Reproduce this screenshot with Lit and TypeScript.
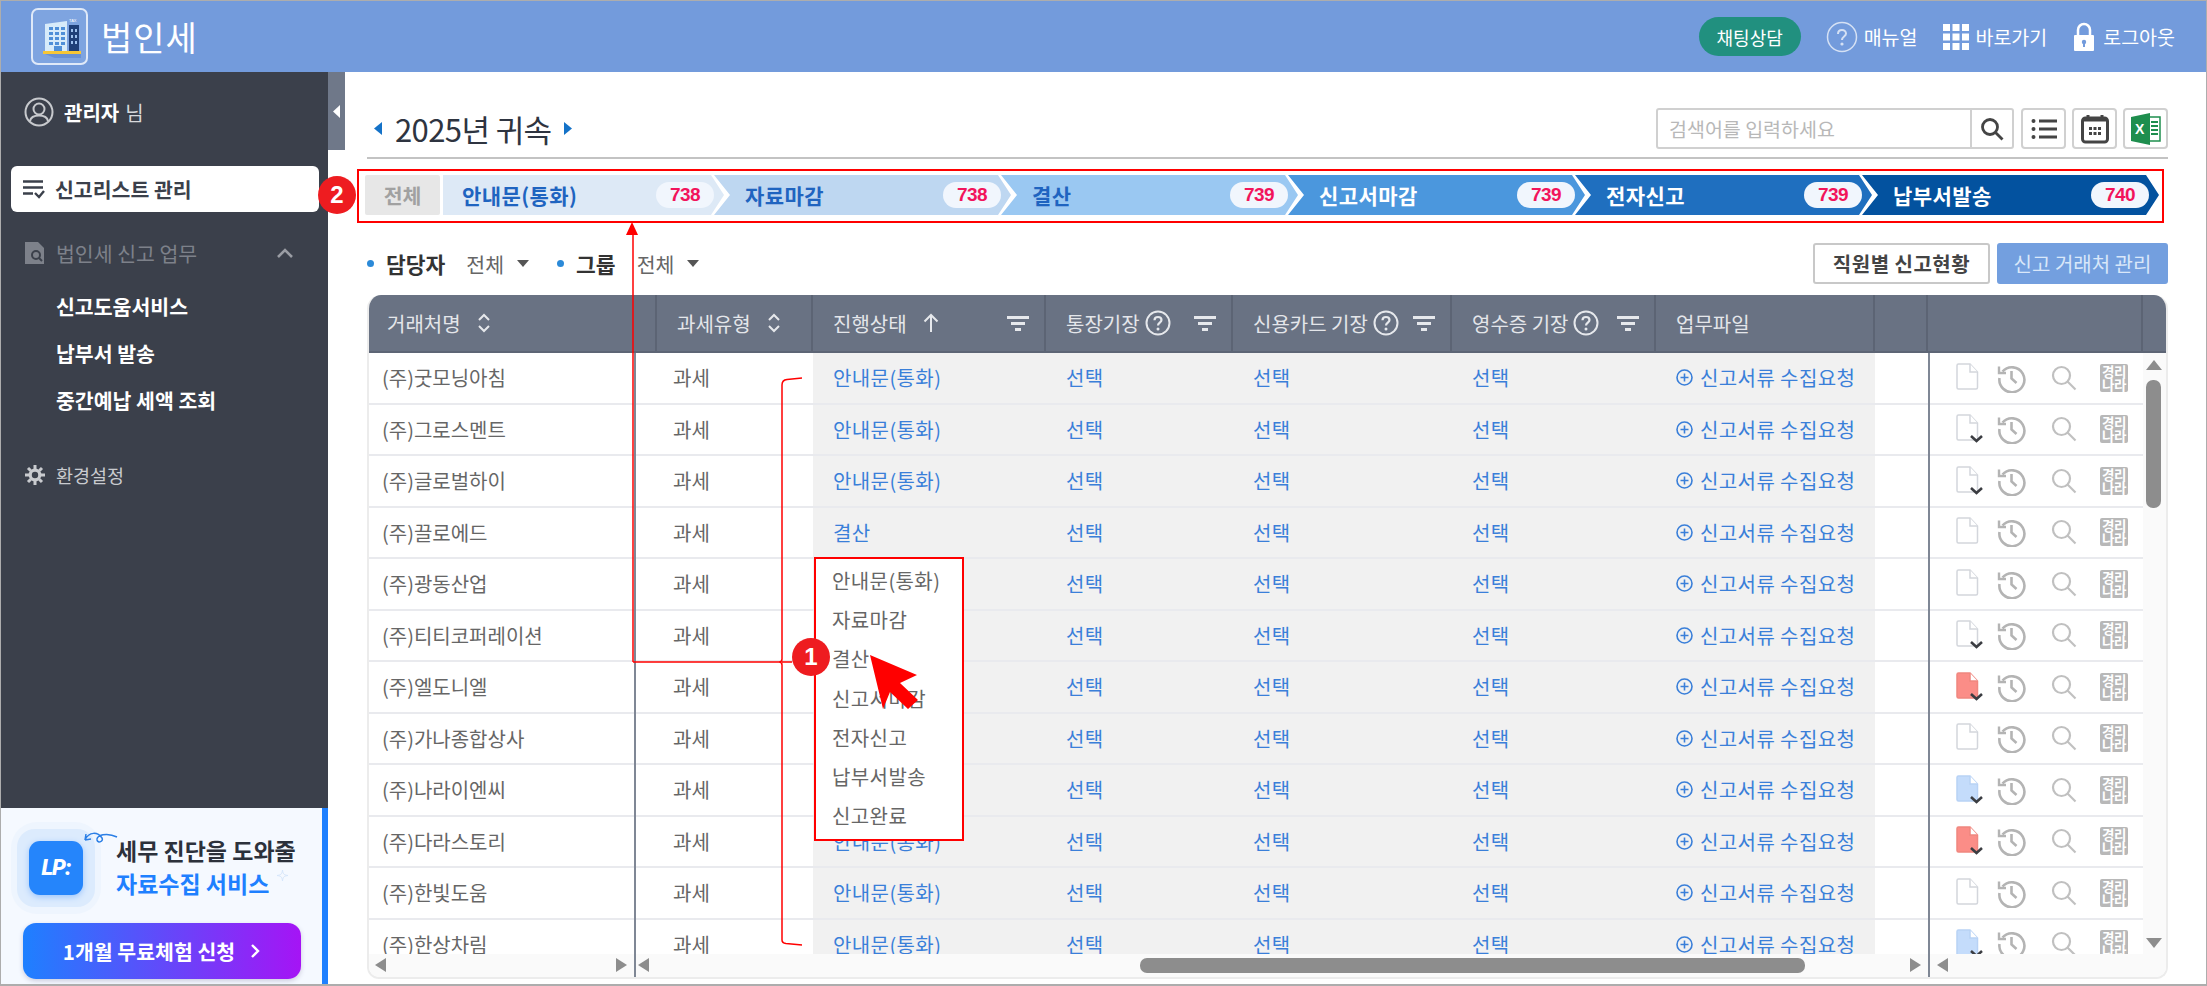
import { LitElement, html, css, svg } from "lit";
import { customElement } from "lit/decorators.js";

const STEPS = [
  { t: "안내문(통화)", n: 738, cls: "s1" },
  { t: "자료마감", n: 738, cls: "s2" },
  { t: "결산", n: 739, cls: "s3" },
  { t: "신고서마감", n: 739, cls: "s4" },
  { t: "전자신고", n: 739, cls: "s5" },
  { t: "납부서발송", n: 740, cls: "s6" },
];
const ROWS: [string, string, string][] = [
  ["(주)굿모닝아침", "안내문(통화)", "plain"],
  ["(주)그로스멘트", "안내문(통화)", "dl"],
  ["(주)글로벌하이", "안내문(통화)", "dl"],
  ["(주)끌로에드", "결산", "plain"],
  ["(주)광동산업", "안내문(통화)", "plain"],
  ["(주)티티코퍼레이션", "안내문(통화)", "dl"],
  ["(주)엘도니엘", "안내문(통화)", "red"],
  ["(주)가나종합상사", "안내문(통화)", "plain"],
  ["(주)나라이엔씨", "안내문(통화)", "blue"],
  ["(주)다라스토리", "안내문(통화)", "red"],
  ["(주)한빛도움", "안내문(통화)", "plain"],
  ["(주)한상차림", "안내문(통화)", "blue"],
];
const MENU = ["안내문(통화)", "자료마감", "결산", "신고서마감", "전자신고", "납부서발송", "신고완료"];

const sortIcon = html`<svg class="hi gapl" width="14" height="22" viewBox="0 0 14 22" fill="none" stroke="#e6e8ec" stroke-width="2"><path d="M2 8l5-5 5 5M2 14l5 5 5-5"/></svg>`;
const upIcon = html`<svg class="hi gapl" width="16" height="20" viewBox="0 0 16 20" fill="none" stroke="#e6e8ec" stroke-width="2"><path d="M8 19V2M1.5 8.5L8 2l6.5 6.5"/></svg>`;
const filterIcon = html`<svg class="hi" width="22" height="16" viewBox="0 0 22 16" fill="#e6e8ec"><rect x="0" y="1" width="22" height="3"/><rect x="4" y="7" width="14" height="3"/><rect x="8" y="13" width="6" height="3"/></svg>`;
const helpIcon = html`<svg class="hi" width="26" height="26" viewBox="0 0 26 26" fill="none"><circle cx="13" cy="13" r="11.5" stroke="#e6e8ec" stroke-width="2"/><path d="M9.5 10.2c0-2 1.5-3.2 3.5-3.2s3.5 1.2 3.5 3c0 2.6-3.5 2.6-3.5 5.4" stroke="#e6e8ec" stroke-width="2.2"/><circle cx="13" cy="19" r="1.5" fill="#e6e8ec"/></svg>`;
const plusIcon = html`<svg class="pi" width="17" height="17" viewBox="0 0 17 17" fill="none" stroke="#3a7fd9" stroke-width="1.6"><circle cx="8.5" cy="8.5" r="7.5"/><path d="M8.5 4.5v8M4.5 8.5h8"/></svg>`;

function docIcon(kind: string) {
  const fill = kind === "red" ? "#fb8d87" : kind === "blue" ? "#c4dcfb" : "#fff";
  const stroke = kind === "red" ? "#f0877f" : kind === "blue" ? "#b8d2f5" : "#d3d6dc";
  const dl = kind !== "plain";
  return html`<svg class="doc" width="30" height="30" viewBox="0 0 30 30" fill="none">
    <path d="M2 2.5a1.5 1.5 0 0 1 1.5-1.5H15l7.5 8v15.5A1.5 1.5 0 0 1 21 26H3.500A1.500 1.500 0 0 1 2 24.500z" fill="${fill}" stroke="${stroke}" stroke-width="1.500"/>
    <path d="M15 1v8h7.500" fill="#fff" stroke="${stroke}" stroke-width="1.500"/>
    ${dl ? svg`<path d="M16 22l5.500 5 5.500-5" stroke="#3b3d42" stroke-width="2.600"/>` : ""}
  </svg>`;
}
const historyIcon = html`<svg width="30" height="30" viewBox="0 0 30 30" fill="none" stroke="#b4b4b4" stroke-width="2.600"><path d="M5.500 8.500A12.500 12.500 0 1 1 2.500 15"/><path d="M2 3.500v6.500h7" stroke-width="2.400"/><path d="M14.500 8v7.500l5 4.500"/></svg>`;
const searchIcon = html`<svg width="26" height="26" viewBox="0 0 26 26" fill="none" stroke="#c0c0c0" stroke-width="2.200"><circle cx="10.500" cy="10.500" r="8.500"/><path d="M16.500 16.500l8 8"/></svg>`;

@customElement("app-root")
export class AppRoot extends LitElement {
  static styles = css`
    :host { display: block; width: 2207px; height: 986px; overflow: hidden; font-family: "Noto Sans CJK KR", "Noto Sans", sans-serif; color: #555; background: #fff; }
    * { box-sizing: border-box; }
    .page { position: relative; width: 2207px; height: 986px; border: 1px solid #adadad; border-bottom-width: 2px; display: flex; flex-direction: column; overflow: hidden; }

    .top { height: 71px; flex: none; background: #739bdc; display: flex; align-items: center; padding: 0 31px 0 30px; color: #fff; }
    .logo { width: 57px; height: 57px; border: 2px solid #dfe9f8; border-radius: 7px; background: #7ea4e0; display: flex; align-items: center; justify-content: center; }
    .brand { font-size: 34px; margin-left: 13px; letter-spacing: 1px; line-height: 1; }
    .spacer { flex: 1; }
    .chat { width: 102px; height: 39px; border-radius: 20px; background: #21907f; color: #fff; font-size: 18px; display: flex; align-items: center; justify-content: center; margin-right: 25px; }
    .tlink { display: flex; align-items: center; gap: 6px; font-size: 19.5px; margin-right: 26px; }
    .tlink:last-child { margin-right: 0; gap: 8px; }

    .body { flex: 1; display: flex; min-height: 0; }
    .side { width: 327px; flex: none; background: #3b404b; display: flex; flex-direction: column; position: relative; color: #fff; }
    .handle { position: absolute; left: 327px; top: 0; width: 17px; height: 78px; background: #6f7889; display: flex; align-items: center; justify-content: center; }
    .user { display: flex; align-items: center; gap: 10px; padding: 0 0 14px 23px; height: 94px; font-size: 20px; }
    .user b { font-weight: 700; }
    .user span { color: #d7d9dc; margin-left: -4px; }
    .active { margin: 0 9px 0 10px; height: 46px; border-radius: 6px; background: #fff; color: #3b404b; display: flex; align-items: center; gap: 10px; padding-left: 12px; font-weight: 700; font-size: 20.5px; }
    .group { display: flex; align-items: center; height: 40px; margin-top: 21px; padding: 0 35px 0 24px; gap: 11px; color: #7d818a; font-size: 20.5px; }
    .group span { flex: 1; }
    .sub { padding: 0 0 0 55px; height: 47px; display: flex; align-items: center; font-size: 20.5px; font-weight: 700; }
    .sub.first { margin-top: 9px; }
    .cfg { display: flex; align-items: center; gap: 11px; padding-left: 24px; height: 40px; margin-top: 32px; color: #c9cbcf; font-size: 18.5px; }
    .banner { margin-top: auto; height: 176px; background: #f5f9ff; border-right: 6px solid #1e80ff; position: relative; padding: 0 0 0 22px; display: flex; flex-direction: column; }
    .bhead { display: flex; align-items: center; height: 115px; padding-top: 4px; }
    .halo { width: 90px; height: 92px; margin-left: -12px; border-radius: 26px; background: #eef5fe; display: flex; align-items: center; justify-content: center; flex: none; }
    .halo2 { width: 78px; height: 78px; border-radius: 18px; background: #dcebfd; display: flex; align-items: center; justify-content: center; }
    .lp { width: 54px; height: 54px; border-radius: 11px; background: #2585fb; color: #fff; font: italic 900 22px "Roboto", sans-serif; display: flex; align-items: center; justify-content: center; letter-spacing: -1px; box-shadow: 0 2px 6px #9cc5fb; }
    .btxt { margin-left: 15px; font-size: 23px; font-weight: 700; line-height: 33px; color: #2c313b; white-space: nowrap; margin-top: -2px; }
    .btxt div + div { color: #1e80ff; }
    .squig { position: absolute; left: 83px; top: 20px; }
    .star { position: absolute; left: 276px; top: 62px; }
    .btn { width: 278px; height: 56px; border-radius: 13px; background: linear-gradient(90deg, #1e80ff, #a514f5); color: #fff; font-size: 20.5px; font-weight: 700; display: flex; align-items: center; justify-content: center; gap: 15px; box-shadow: 0 2px 5px #ccd; margin-top: 0; }

    .main { flex: 1; min-width: 0; padding: 0 38px 5px 39px; display: flex; flex-direction: column; position: relative; }
    .title { height: 87px; flex: none; border-bottom: 2px solid #c3c3c3; display: flex; align-items: center; padding: 28px 0 0 7px; }
    .ttext { font-size: 31px; color: #2e3440; margin: 0 12px 0 13px; letter-spacing: -0.6px; line-height: 1; }
    .search { width: 358px; height: 41px; border: 2px solid #d0d0d0; border-radius: 3px; display: flex; align-items: center; color: #b8b8b8; font-size: 19.5px; padding-left: 11px; margin-right: 1px; }
    .search span { flex: 1; }
    .sbtn { width: 42px; height: 37px; border-left: 2px solid #d0d0d0; display: flex; align-items: center; justify-content: center; }
    .tbtn { width: 45px; height: 41px; border: 2px solid #d0d0d0; border-radius: 4px; margin-left: 6px; display: flex; align-items: center; justify-content: center; background: #fff; }

    .pipe { display: flex; height: 40px; margin: 16px 0 0 -2px; flex: none; }
    .all { width: 75px; border-radius: 2px; background: #e7e7e7; color: #a1a1a1; font-size: 20.5px; font-weight: 700; display: flex; align-items: center; justify-content: center; margin-right: 3px; }
    .step { width: 297px; margin-right: -10px; flex: none; display: flex; align-items: center; padding: 0 10px 0 31px; font-size: 21px; font-weight: 700; letter-spacing: 0.4px; white-space: nowrap; clip-path: polygon(0 0, calc(100% - 13px) 0, 100% 50%, calc(100% - 13px) 100%, 0 100%, 16px 50%); }
    .step.s1 { padding-left: 19px; clip-path: polygon(0 0, calc(100% - 13px) 0, 100% 50%, calc(100% - 13px) 100%, 0 100%); width: 281px; }
    .step span { flex: 1; }
    .step i { width: 58px; height: 26px; border-radius: 13px; background: #f1f6fd; color: #f2145b; font: 700 19px "Liberation Sans", sans-serif; letter-spacing: -0.5px; display: flex; align-items: center; justify-content: center; flex: none; }
    .s1 { background: #dde9f6; color: #1f64c0; }
    .s2 { background: #bed7f1; color: #1f64c0; }
    .s3 { background: #9ac8f2; color: #1f64c0; }
    .s4 { background: #4b97dd; color: #fff; }
    .s5 { background: #1f6fbf; color: #fff; }
    .s6 { background: #03529f; color: #fff; }

    .filters { display: flex; align-items: center; height: 41px; margin-top: 28px; flex: none; font-size: 20.5px; color: #666; }
    .dot { width: 7px; height: 7px; border-radius: 50%; background: #2b8ad8; margin: 0 12px 0 0; }
    .filters b { font-weight: 700; color: #333; font-size: 21.5px; margin-right: 21px; }
    .caret { width: 0; height: 0; border: 6px solid transparent; border-top: 7px solid #555; border-bottom: 0; margin: 0 28px 0 13px; }
    .caret.g { margin-right: 0; }
    .fbtn { width: 177px; height: 41px; border: 2px solid #c8c8c8; border-radius: 3px; color: #444; font-weight: 700; font-size: 20px; letter-spacing: 0.5px; display: flex; align-items: center; justify-content: center; background: #fff; white-space: nowrap; }
    .fbtn.pri { width: 171px; background: #739fdf; border-color: #739fdf; color: #d9e7f9; font-weight: 400; margin-left: 7px; letter-spacing: 0; }

    .table { flex: 1; margin-top: 11px; min-height: 0; position: relative; border-radius: 14px 14px 12px 12px; border: 2px solid #ececec; border-top: 0; display: flex; flex-direction: column; overflow: hidden; }
    .cols { display: grid; grid-template-columns: 288px 156px 233px 187px 219px 204px 219px 53px 215px 1fr; }
    .thead { height: 58px; flex: none; background: #697283; color: #e4e6ea; font-size: 20px; border-bottom: 2px solid #5d6575; }
    .th { display: flex; align-items: center; border-right: 2px solid #5c6474; padding-left: 20px; gap: 5px; min-width: 0; white-space: nowrap; }
    .th:first-child { padding-left: 18px; }
    .th:last-child { border-right: 0; }
    .th .gapl { margin-left: 11px; }
    .th .grow { flex: 1; }
    .th .pr { margin-right: 15px; display: flex; }
    .tbody { flex: 1; min-height: 0; overflow: hidden; }
    .tr { height: 51.5px; font-size: 20px; color: #666; }
    .td { display: flex; align-items: center; border-bottom: 2px solid #e9eaee; padding-left: 20px; white-space: nowrap; min-width: 0; }
    .td:first-child { padding-left: 13px; }
    .td:nth-child(2) { padding-left: 16px; }
    .td.g { background: #f1f1f1; color: #3a7fd9; letter-spacing: 0.4px; }
    .td.act { padding-left: 27px; gap: 0; }
    .td.sc { border: 0; background: #fafafa; padding: 0; }
    .td .doc { margin-right: 12px; flex: none; }
    .td .hist { margin-right: 24px; display: flex; }
    .td .sr { margin-right: 23px; display: flex; }
    .td .pi { margin-right: 7px; flex: none; }
    .kn { width: 28px; height: 28px; background: #b8b8b8; color: #fff; border-radius: 2px; font-size: 13.5px; line-height: 13px; font-weight: 700; text-align: center; display: flex; align-items: center; justify-content: center; letter-spacing: -0.5px; }
    .tfoot { height: 23px; flex: none; background: #fafafa; position: relative; }

    .ar { position: absolute; width: 0; height: 0; border-style: solid; border-color: transparent; }
    .ar.l { border-width: 7px 11px 7px 0; border-right-color: #8d8d8d; top: 4px; }
    .ar.r { border-width: 7px 0 7px 11px; border-left-color: #8d8d8d; top: 4px; }
    .ar.u { border-width: 0 8px 10px; border-bottom-color: #8d8d8d; }
    .ar.d { border-width: 10px 8px 0; border-top-color: #8d8d8d; }
    .thumb { position: absolute; background: #8d8d8d; border-radius: 7px; }
    .fline { position: absolute; top: 58px; bottom: 0; width: 2px; background: #7f8795; }
    .sbar { position: absolute; right: 0; top: 58px; bottom: 0; width: 23px; background: #fafafa; }

    .over { position: absolute; left: 0; top: 0; width: 2207px; height: 986px; pointer-events: none; }
    .redbox { position: absolute; left: 356px; top: 168px; width: 1807px; height: 54px; border: 2px solid #f00; }
    .badge { position: absolute; width: 38px; height: 38px; border-radius: 50%; background: #ee1c20; color: #fff; font: 700 24px "Liberation Sans", sans-serif; display: flex; align-items: center; justify-content: center; }
    .menu { position: absolute; left: 813px; top: 556px; width: 150px; height: 284px; background: #fff; border: 2px solid #f00; padding: 2px 0 0 16px; font-size: 20px; letter-spacing: 0.4px; color: #666; display: flex; flex-direction: column; }
    .menu div { height: 39.2px; display: flex; align-items: center; white-space: nowrap; }
  `;

  render() {
    return html`<div class="page">
      <header class="top">
        <div class="logo">
          <svg width="42" height="42" viewBox="0 0 42 42">
            <path d="M6 38l12 5h24v-5z" fill="#6890d4"/>
            <path d="M6 8l22-3v30H6z" fill="#d7ebfa"/><rect x="30" y="9" width="10" height="26" fill="#1f3f78"/><rect x="4" y="35" width="38" height="3" fill="#f6c636"/>
            ${[0,1,2,3].map(r => [0,1,2].map(c => svg`<rect x="${10+c*6}" y="${11+r*5}" width="4" height="3" fill="#4f8fd8"/>`))}
            ${[0,1,2].map(r => [0,1].map(c => svg`<rect x="${32+c*4}" y="${13+r*6}" width="2" height="3" fill="#9dc0ee"/>`))}
            <rect x="15" y="30" width="8" height="5" fill="#4f8fd8"/>
            <text x="30" y="6" font-size="4" fill="#fff" font-family="Liberation Sans">TAX</text>
          </svg>
        </div>
        <div class="brand">법인세</div>
        <div class="spacer"></div>
        <div class="chat">채팅상담</div>
        <div class="tlink"><svg width="32" height="32" viewBox="0 0 32 32" fill="none"><circle cx="16" cy="16" r="14.500" stroke="#d5e1f4" stroke-width="1.500"/><path d="M12 13c0-2.500 1.800-4 4-4s4 1.500 4 3.600c0 3-4 3-4 6.400" stroke="#d5e1f4" stroke-width="2"/><circle cx="16" cy="23" r="1.600" fill="#d5e1f4"/></svg>매뉴얼</div>
        <div class="tlink"><svg width="26" height="26" viewBox="0 0 26 26" fill="#fff">${[0,1,2].map(r => [0,1,2].map(c => svg`<rect x="${c*9.500}" y="${r*9.500}" width="7" height="7"/>`))}</svg>바로가기</div>
        <div class="tlink"><svg width="22" height="30" viewBox="0 0 22 30" fill="none"><path d="M5 14V8a6 6 0 0 1 12 0v6" stroke="#fff" stroke-width="2.500"/><rect x="1" y="13" width="20" height="16" rx="1" fill="#fff"/><circle cx="11" cy="20" r="2.200" fill="#739bdc"/><rect x="10" y="20" width="2" height="5" fill="#739bdc"/></svg>로그아웃</div>
      </header>
      <div class="body">
        <aside class="side">
          <div class="handle"><svg width="8" height="13" viewBox="0 0 8 13" fill="#fff"><path d="M7 0v13L0 6.500z"/></svg></div>
          <div class="user">
            <svg width="30" height="30" viewBox="0 0 30 30" fill="none"><circle cx="15" cy="15" r="13.500" stroke="#c7c9cd" stroke-width="2"/><circle cx="15" cy="12" r="5.500" stroke="#c7c9cd" stroke-width="2"/><path d="M6 24c1-5 5-5.500 9-5.500s8 .5 9 5.500" stroke="#c7c9cd" stroke-width="2"/></svg>
            <b>관리자</b><span>님</span>
          </div>
          <div class="active">
            <svg width="22" height="20" viewBox="0 0 22 20" fill="none" stroke="#3b404b" stroke-width="2.400"><path d="M0 2.500h20M0 8.500h20M0 14.500h10M12 14l4 4 5-6"/></svg>
            신고리스트 관리
          </div>
          <div class="group">
            <svg width="20" height="24" viewBox="0 0 20 24" fill="#7d818a"><path d="M0 1h13l6 6v16H0z"/><circle cx="11" cy="14" r="4" fill="none" stroke="#3b404b" stroke-width="2"/><path d="M14 17l3 3" stroke="#3b404b" stroke-width="2"/></svg>
            <span>법인세 신고 업무</span>
            <svg width="16" height="10" viewBox="0 0 16 10" fill="none" stroke="#9a9da4" stroke-width="2.600"><path d="M1 9l7-7 7 7"/></svg>
          </div>
          <div class="sub first">신고도움서비스</div>
          <div class="sub">납부서 발송</div>
          <div class="sub">중간예납 세액 조회</div>
          <div class="cfg">
            <svg width="20" height="20" viewBox="0 0 20 20" fill="none"><circle cx="10" cy="10" r="4.800" stroke="#c9cbcf" stroke-width="3.200"/><path d="M10 0v4M10 16v4M0 10h4M16 10h4M3 3l2.800 2.800M14.200 14.200L17 17M17 3l-2.800 2.800M5.800 14.200L3 17" stroke="#c9cbcf" stroke-width="3"/></svg>
            환경설정
          </div>
          <div class="banner">
            <div class="bhead">
              <div class="halo"><div class="halo2"><div class="lp">LP:</div></div></div>
              <div class="btxt"><div>세무 진단을 도와줄</div><div>자료수집 서비스</div></div>
            </div>
            <svg class="squig" width="34" height="16" viewBox="0 0 34 16" fill="none" stroke="#2b7fe6" stroke-width="1.500"><path d="M1 12c4-9 13-8 17-2 2 3-4 6-5 2-1-5 10-8 20-3M1 12l1-6M1 12l6-1"/></svg>
            <svg class="star" width="11" height="11" viewBox="0 0 11 11" fill="none" stroke="#d5e6fb"><path d="M5.500 0c.5 4 1.500 5 5.500 5.500-4 .5-5 1.500-5.500 5.500C5 7 4 6 0 5.500 4 5 5 4 5.500 0z"/></svg>
            <div class="btn">1개월 무료체험 신청 <svg width="11" height="16" viewBox="0 0 11 16" fill="none" stroke="#fff" stroke-width="2.400"><path d="M2 2l6 6-6 6"/></svg></div>
          </div>
        </aside>
        <main class="main">
          <div class="title">
            <svg width="8" height="13" viewBox="0 0 8 13" fill="#1472c8"><path d="M8 0v13L0 6.500z"/></svg>
            <div class="ttext">2025년 귀속</div>
            <svg width="8" height="13" viewBox="0 0 8 13" fill="#1472c8"><path d="M0 0v13l8-6.500z"/></svg>
            <div class="spacer"></div>
            <div class="search"><span>검색어를 입력하세요</span><div class="sbtn"><svg width="24" height="24" viewBox="0 0 24 24" fill="none" stroke="#444" stroke-width="2.800"><circle cx="10" cy="10" r="7.500"/><path d="M15.500 15.500l7 7"/></svg></div></div>
            <div class="tbtn"><svg width="26" height="22" viewBox="0 0 26 22" fill="#444"><circle cx="2.500" cy="3" r="2"/><circle cx="2.500" cy="11" r="2"/><circle cx="2.500" cy="19" r="2"/><rect x="8" y="1.500" width="18" height="3"/><rect x="8" y="9.500" width="18" height="3"/><rect x="8" y="17.500" width="18" height="3"/></svg></div>
            <div class="tbtn"><svg width="28" height="30" viewBox="0 0 28 30" fill="none"><rect x="1.500" y="4" width="25" height="24" rx="3" stroke="#444" stroke-width="3"/><path d="M7 1v6M21 1v6M2 6h24" stroke="#444" stroke-width="3"/><g fill="#444"><rect x="8" y="13" width="3" height="3"/><rect x="12.500" y="13" width="3" height="3"/><rect x="17" y="13" width="3" height="3"/><rect x="8" y="18" width="3" height="3"/><rect x="12.500" y="18" width="3" height="3"/><rect x="17" y="18" width="3" height="3"/></g></svg></div>
            <div class="tbtn"><svg width="30" height="32" viewBox="0 0 30 32"><path d="M18 4h11v24H18z" fill="#fff" stroke="#1e8e4e" stroke-width="1.500"/><path d="M20 9h7M20 13h7M20 17h7M20 21h7" stroke="#1e8e4e" stroke-width="2"/><path d="M0 4l19-4v32L0 28z" fill="#1e8e4e"/><text x="4" y="21" font-size="14" font-weight="700" fill="#fff" font-family="Liberation Sans">X</text></svg></div>
          </div>
          <div class="pipe">
            <div class="all">전체</div>
            ${STEPS.map(s => html`<div class="step ${s.cls}"><span>${s.t}</span><i>${s.n}</i></div>`)}
          </div>
          <div class="filters">
            <div class="dot"></div><b>담당자</b>전체<div class="caret"></div>
            <div class="dot"></div><b>그룹</b>전체<div class="caret g"></div>
            <div class="spacer"></div>
            <div class="fbtn">직원별 신고현황</div>
            <div class="fbtn pri">신고 거래처 관리</div>
          </div>
          <div class="table">
            <div class="thead cols">
              <div class="th">거래처명 ${sortIcon}</div>
              <div class="th">과세유형 ${sortIcon}</div>
              <div class="th">진행상태 ${upIcon}<span class="grow"></span><span class="pr">${filterIcon}</span></div>
              <div class="th">통장기장 ${helpIcon}<span class="grow"></span><span class="pr">${filterIcon}</span></div>
              <div class="th">신용카드 기장 ${helpIcon}<span class="grow"></span><span class="pr">${filterIcon}</span></div>
              <div class="th">영수증 기장 ${helpIcon}<span class="grow"></span><span class="pr">${filterIcon}</span></div>
              <div class="th">업무파일</div>
              <div class="th"></div>
              <div class="th"></div>
              <div class="th"></div>
            </div>
            <div class="tbody">
              ${ROWS.map(r => html`<div class="tr cols">
                <div class="td">${r[0]}</div>
                <div class="td">과세</div>
                <div class="td g">${r[1]}</div>
                <div class="td g">선택</div>
                <div class="td g">선택</div>
                <div class="td g">선택</div>
                <div class="td g">${plusIcon}신고서류 수집요청</div>
                <div class="td"></div>
                <div class="td act">
                  ${docIcon(r[2])}
                  <span class="hist">${historyIcon}</span>
                  <span class="sr">${searchIcon}</span>
                  <span class="kn">경리<br />나라</span>
                </div>
                <div class="td sc"></div>
              </div>`)}
            </div>
            <div class="tfoot">
              <div class="ar l" style="left:6px"></div><div class="ar r" style="left:247px"></div>
              <div class="ar l" style="left:269px"></div>
              <div class="thumb" style="left:771px;width:665px;height:15px;top:4px"></div>
              <div class="ar r" style="left:1541px"></div>
              <div class="ar l" style="left:1568px"></div><div class="ar r" style="left:1780px"></div>
            </div>
            <div class="fline" style="left:265px"></div>
            <div class="fline" style="left:1559px"></div>
            <div class="sbar">
              <div class="ar u" style="left:3px;top:7px"></div>
              <div class="thumb" style="left:3px;width:15px;top:27px;height:128px"></div>
              <div class="ar d" style="left:3px;top:585px"></div>
            </div>
          </div>
        </main>
      </div>

      <div class="menu">${MENU.map(m => html`<div>${m}</div>`)}</div>
      <svg class="over" width="2207" height="986" viewBox="1 1 2207 986" fill="none">
        <path d="M633 662V232" stroke="#f00" stroke-width="1.500"/>
        <path d="M632 222l-6 13h12z" fill="#f00"/>
        <path d="M633 662h146q3 0 3-3V385q0-5 5-5.500l15-1.500M633 662h146q3 0 3 3v275q0 3 4 3.500l16 1.500M782 662h10" stroke="#f00" stroke-width="1.500"/>
        <path d="M870 655l47 20-17 8 18 17-10 9-18-17-7 17z" fill="#f00"/>
      </svg>
      <div class="redbox"></div>
      <div class="badge" style="left:317px;top:175px">2</div>
      <div class="badge" style="left:791px;top:637px">1</div>
    </div>`;
  }
}
